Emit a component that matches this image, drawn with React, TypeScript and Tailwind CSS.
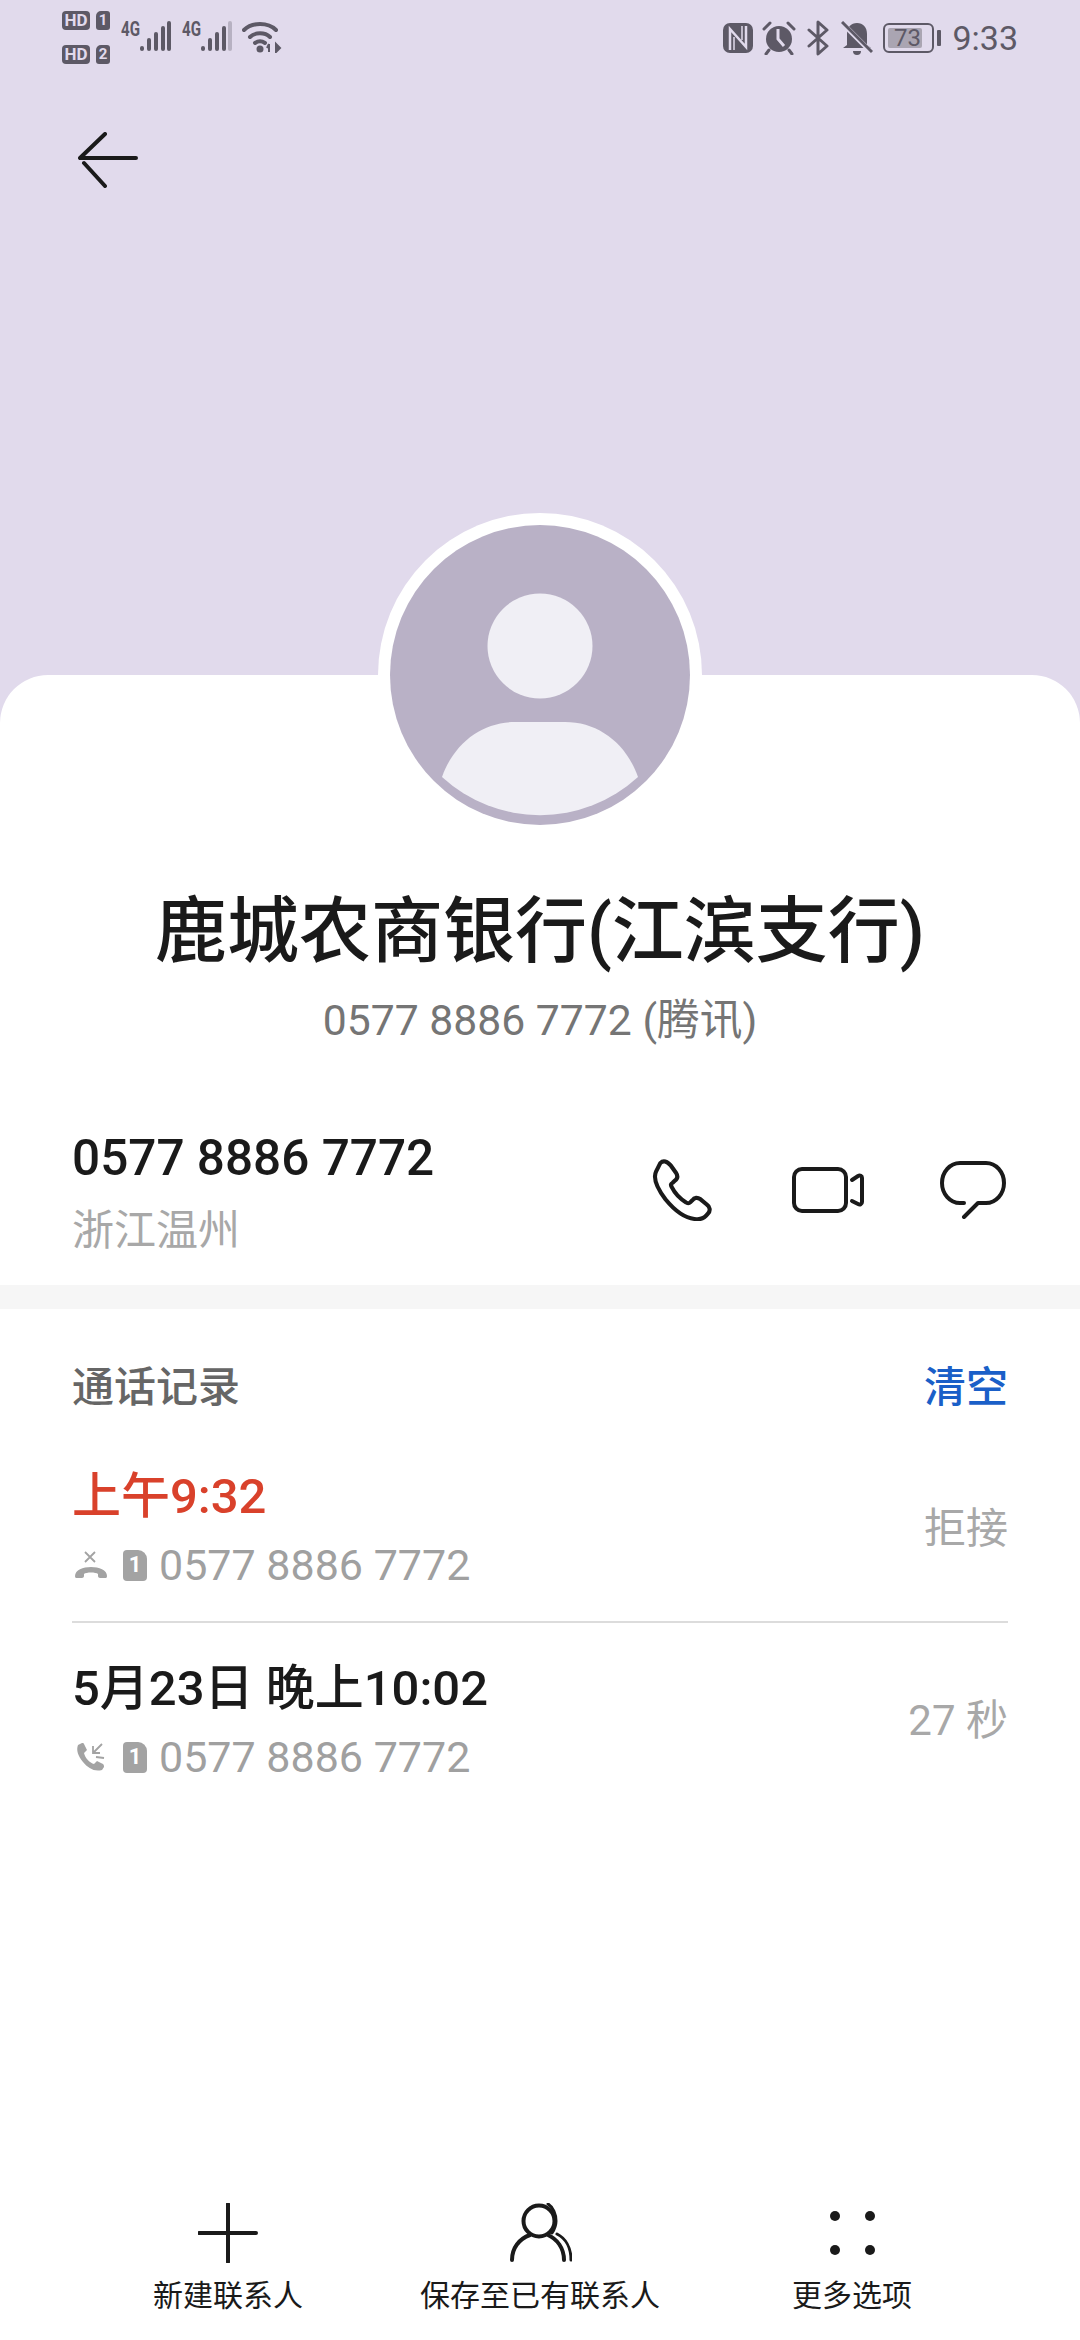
import React from 'react';

const SANS = "font-['Roboto','Noto_Sans_CJK_SC',sans-serif]";

function SignalBars({ weak }: { weak?: boolean }) {
  return (
    <svg width="33" height="31" viewBox="0 0 33 31" className="self-end">
      <g stroke="#5d5966" strokeWidth="4" strokeLinecap="round">
        <line x1="3" y1="27" x2="3" y2="28" />
        <line x1="10" y1="19" x2="10" y2="28" />
        <line x1="17" y1="13" x2="17" y2="28" />
        <line x1="24" y1="7" x2="24" y2="28" />
        <line x1="30" y1="2" x2="30" y2="28" stroke={weak ? '#b7b1c2' : '#5d5966'} />
      </g>
    </svg>
  );
}

function Hd({ n }: { n: string }) {
  return (
    <div className="flex items-center gap-[6px]">
      <span className="flex h-[19px] w-[28px] items-center justify-center rounded-[4px] bg-[#5d5966] font-['Roboto',sans-serif] text-[17px] font-bold leading-none text-[#e1daec]">
        HD
      </span>
      <span className="flex h-[19px] w-[14px] items-center justify-center rounded-[3px] rounded-tl-[5px] bg-[#5d5966] font-['Roboto',sans-serif] text-[15px] font-bold leading-none text-[#e1daec]">
        {n}
      </span>
    </div>
  );
}

function FourG() {
  return (
    <span className="w-[18px] origin-left scale-x-[0.72] font-['Roboto',sans-serif] text-[21px] font-bold leading-[16px] text-[#5d5966]">
      4G
    </span>
  );
}

function StatusBar() {
  return (
    <div className="flex h-[70px] items-start justify-between pl-[62px] pr-[62px] pt-[11px]">
      <div className="flex items-start">
        <div className="flex flex-col gap-[15px]">
          <Hd n="1" />
          <Hd n="2" />
        </div>
        <div className="ml-[11px] mt-[10px] flex h-[31px] items-start">
          <FourG />
          <SignalBars />
        </div>
        <div className="ml-[10px] mt-[10px] flex h-[31px] items-start">
          <FourG />
          <SignalBars weak />
        </div>
        <svg width="40" height="32" viewBox="0 0 40 32" className="ml-[9px] mt-[10px]">
          <g fill="none" stroke="#5d5966" strokeWidth="4" strokeLinecap="round">
            <path d="M2 9C10 1 26 1 34 9" />
            <path d="M8 16C13 11 23 11 28 16" />
            <path d="M13 22C16 20 20 20 23 22" />
          </g>
          <circle cx="18" cy="28" r="3.5" fill="#5d5966" />
          <path d="M27 31v-8M25 27l2-4M34 23v8l4-4z" stroke="#5d5966" strokeWidth="2" fill="#5d5966" />
        </svg>
      </div>
      <div className="flex items-center pt-[9px]">
        <svg width="30" height="30" viewBox="0 0 30 30">
          <rect width="30" height="30" rx="7" fill="#5d5966" />
          <path d="M7 27V6l16 18V3" fill="none" stroke="#e1daec" strokeWidth="2.5" />
          <path d="M11 27V14M19 17V3" fill="none" stroke="#e1daec" strokeWidth="1.5" />
        </svg>
        <svg width="34" height="34" viewBox="0 0 34 34" className="ml-[9px]">
          <circle cx="17" cy="18" r="13" fill="#5d5966" />
          <path d="M2 8l6-6M32 8l-6-6M7 29l-3 4M27 29l3 4" stroke="#5d5966" strokeWidth="3" strokeLinecap="round" />
          <path d="M16 8v10l6 7" fill="none" stroke="#e1daec" strokeWidth="3" />
        </svg>
        <svg width="24" height="36" viewBox="0 0 24 36" className="ml-[10px]">
          <path d="M3 10l18 16-9 8V2l9 8L3 26" fill="none" stroke="#5d5966" strokeWidth="3" strokeLinejoin="round" strokeLinecap="round" />
        </svg>
        <svg width="32" height="34" viewBox="0 0 32 34" className="ml-[11px]">
          <path d="M16 2c-6 0-10 4-10 11v11l-4 3h28l-4-3V13C26 6 22 2 16 2z" fill="#5d5966" />
          <path d="M12 30a4 4 0 0 0 8 0z" fill="#5d5966" />
          <path d="M1 2l30 30" stroke="#e1daec" strokeWidth="5" />
          <path d="M1 1l30 30" stroke="#5d5966" strokeWidth="3" />
        </svg>
        <div className="relative ml-[10px] flex h-[30px] w-[51px] items-center rounded-[6px] border-[2.5px] border-[#5d5966] p-[3px]">
          <div className="h-full w-[34px] rounded-[2px] bg-[#aaa5b2]" />
          <span className="absolute inset-0 flex items-center justify-center pr-[3px] font-['Roboto',sans-serif] text-[24px] leading-none text-[#5d5966]">73</span>
        </div>
        <div className="ml-[3px] h-[16px] w-[4px] rounded-[1px] bg-[#5d5966]" />
        <span className="ml-[11px] font-['Roboto',sans-serif] text-[34px] leading-none text-[#5d5966]">9:33</span>
      </div>
    </div>
  );
}

function Avatar() {
  return (
    <div className="absolute left-1/2 top-[-162px] h-[324px] w-[324px] -translate-x-1/2 rounded-full bg-white p-[12px]">
      <svg width="300" height="300" viewBox="0 0 300 300">
        <circle cx="150" cy="150" r="150" fill="#b9b1c6" />
        <circle cx="150" cy="121" r="52.5" fill="#f0eff5" />
        <path d="M52 252C64 218 92 197 125 197h50C208 197 236 218 248 252A145 145 0 0 1 52 252z" fill="#f0eff5" />
      </svg>
    </div>
  );
}

function MissedIcon() {
  return (
    <svg width="36" height="30" viewBox="0 0 36 30">
      <path d="M12 2l10 10M22 2L12 12" stroke="#a3a3a3" strokeWidth="1.8" />
      <path d="M2 26c0-6 8-9 16-9s16 3 16 9c0 2-1 2-2 2h-5c-1 0-2-1-2-2v-2c-2-2-12-2-14 0v2c0 1-1 2-2 2H4c-1 0-2 0-2-2z" fill="#a3a3a3" />
    </svg>
  );
}

function IncomingIcon() {
  return (
    <svg width="32" height="32" viewBox="0 0 32 32">
      <path d="M3 4l4-2c1 0 2 0 2 1l3 6-3 3c1 5 6 10 10 11l3-3 6 3c1 1 1 2 1 3l-2 3c-8 2-14-2-19-8C3 15 1 9 3 4z" fill="#a3a3a3" />
      <path d="M27 3l-9 9M18 5v7h7" fill="none" stroke="#a3a3a3" strokeWidth="1.8" />
      <path d="M21 16l8 1" stroke="#a3a3a3" strokeWidth="1.8" />
    </svg>
  );
}

function SimIcon() {
  return (
    <span className="ml-[14px] flex h-[31px] w-[24px] items-center justify-center rounded-[4px] rounded-tr-[9px] bg-[#a3a3a3] font-['Roboto',sans-serif] text-[22px] font-bold leading-none text-white">
      1
    </span>
  );
}

function CallRow({ time, red, icon, result, rowClass }: { time: string; red?: boolean; icon: React.ReactNode; result: string; rowClass: string }) {
  return (
    <div className={`flex items-center justify-between ${rowClass}`}>
      <div>
        <div className={`text-[49px] font-medium leading-[60px] ${red ? 'text-[#d9412b]' : 'text-[#1a1a1a]'}`}>{time}</div>
        <div className="mt-[13px] flex h-[50px] items-center">
          <span className="flex w-[37px] justify-center">{icon}</span>
          <SimIcon />
          <span className="ml-[12px] text-[43px] leading-[50px] text-[#a0a0a0]">0577 8886 7772</span>
        </div>
      </div>
      <span className="text-[42px] leading-[50px] text-[#a8a8a8]">{result}</span>
    </div>
  );
}

function NavItem({ icon, label }: { icon: React.ReactNode; label: string }) {
  return (
    <div className="flex flex-col items-center">
      <div className="flex h-[62px] items-center justify-center">{icon}</div>
      <span className="mt-[14px] text-[30px] leading-[36px] text-[#1a1a1a]">{label}</span>
    </div>
  );
}

export default function App() {
  return (
    <div className={`flex h-[2340px] w-[1080px] flex-col overflow-hidden bg-[#e1daec] ${SANS}`}>
      <div className="h-[675px] shrink-0">
        <StatusBar />
        <div className="ml-[78px] mt-[62px]">
          <svg width="60" height="56" viewBox="0 0 60 56">
            <path d="M2 26L27 2M2 26h56M6 31l21 23" fill="none" stroke="#1a1a1a" strokeWidth="4" strokeLinecap="round" />
          </svg>
        </div>
      </div>

      <div className="relative flex flex-1 flex-col rounded-t-[48px] bg-white">
        <Avatar />

        <div className="pt-[215px] text-center">
          <h1 className="text-[72px] font-medium leading-[84px] text-[#1a1a1a]">鹿城农商银行(江滨支行)</h1>
          <p className="mt-[21px] text-[42.7px] leading-[50px] text-[#757575]">0577 8886 7772 (腾讯)</p>
        </div>

        <div className="mt-[83px] flex items-start justify-between px-[72px]">
          <div>
            <div className="text-[49.5px] font-medium leading-[60px] text-[#1a1a1a]">0577 8886 7772</div>
            <div className="mt-[18px] text-[42px] leading-[50px] text-[#a8a8a8]">浙江温州</div>
          </div>
          <div className="mt-[31px] flex items-center pr-[2px]">
            <svg width="62" height="62" viewBox="0 0 60 60">
              <path d="M4 12c-3 6 0 15 9 27 9 11 18 18 28 19 5 1 10-1 13-5 3-3 2-7-1-9l-6-5c-3-2-6-2-8 1l-2 2c-1 1-3 1-4 0-5-3-11-9-14-15-1-2-1-3 1-4l2-2c3-2 3-5 1-8l-5-7C14 2 11 1 8 4z" fill="none" stroke="#1a1a1a" strokeWidth="4" strokeLinejoin="round" />
            </svg>
            <svg width="72" height="46" viewBox="0 0 72 46" className="ml-[78px]">
              <rect x="2" y="2" width="52" height="42" rx="8" fill="none" stroke="#1a1a1a" strokeWidth="4" />
              <path d="M60 13l6-4c2-1 4 0 4 2v24c0 2-2 3-4 2l-6-3" fill="none" stroke="#1a1a1a" strokeWidth="4" strokeLinecap="round" />
            </svg>
            <svg width="66" height="58" viewBox="0 0 66 58" className="ml-[76px]">
              <path d="M24 42h-4C10 42 2 33 2 22S10 2 20 2h26c10 0 18 9 18 20s-8 20-18 20h-8L24 56" fill="none" stroke="#1a1a1a" strokeWidth="4" strokeLinecap="round" strokeLinejoin="round" />
            </svg>
          </div>
        </div>

        <div className="mt-[29px] h-[24px] bg-[#f6f6f6]" />

        <div className="px-[72px]">
          <div className="mt-[54px] flex items-center justify-between">
            <span className="text-[42px] font-medium leading-[50px] text-[#666666]">通话记录</span>
            <span className="text-[42px] font-medium leading-[50px] text-[#1a5fc8]">清空</span>
          </div>
          <CallRow rowClass="mt-[54px]" time="上午9:32" red icon={<MissedIcon />} result="拒接" />
          <div className="mt-[31px] h-[2px] bg-[#dcdcdc]" />
          <CallRow rowClass="mt-[36px]" time="5月23日 晚上10:02" icon={<IncomingIcon />} result="27 秒" />
        </div>

        <div className="mt-auto grid grid-cols-3 px-[72px] pb-[26px]">
          <NavItem
            label="新建联系人"
            icon={
              <svg width="60" height="60" viewBox="0 0 60 60">
                <path d="M30 1v58M1 30h57" stroke="#1a1a1a" strokeWidth="4" strokeLinecap="round" />
              </svg>
            }
          />
          <NavItem
            label="保存至已有联系人"
            icon={
              <svg width="62" height="60" viewBox="0 0 62 60" className="ml-[2px]">
                <g fill="none" stroke="#1a1a1a" strokeLinecap="round">
                  <circle cx="29" cy="18" r="15.5" strokeWidth="4" />
                  <path d="M2 57C2 45 9 36 20 32M38 32c9 4 16 13 16 25" strokeWidth="4" />
                  <path d="M38 1c5 3 8 10 8 17 0 5-2 9-4 12M47 31c8 4 14 13 14 26" strokeWidth="3" />
                </g>
              </svg>
            }
          />
          <NavItem
            label="更多选项"
            icon={
              <div className="grid grid-cols-2 gap-x-[25px] gap-y-[24px]">
                <div className="h-[10px] w-[10px] rounded-full bg-[#1a1a1a]" />
                <div className="h-[10px] w-[10px] rounded-full bg-[#1a1a1a]" />
                <div className="h-[10px] w-[10px] rounded-full bg-[#1a1a1a]" />
                <div className="h-[10px] w-[10px] rounded-full bg-[#1a1a1a]" />
              </div>
            }
          />
        </div>
      </div>
    </div>
  );
}
